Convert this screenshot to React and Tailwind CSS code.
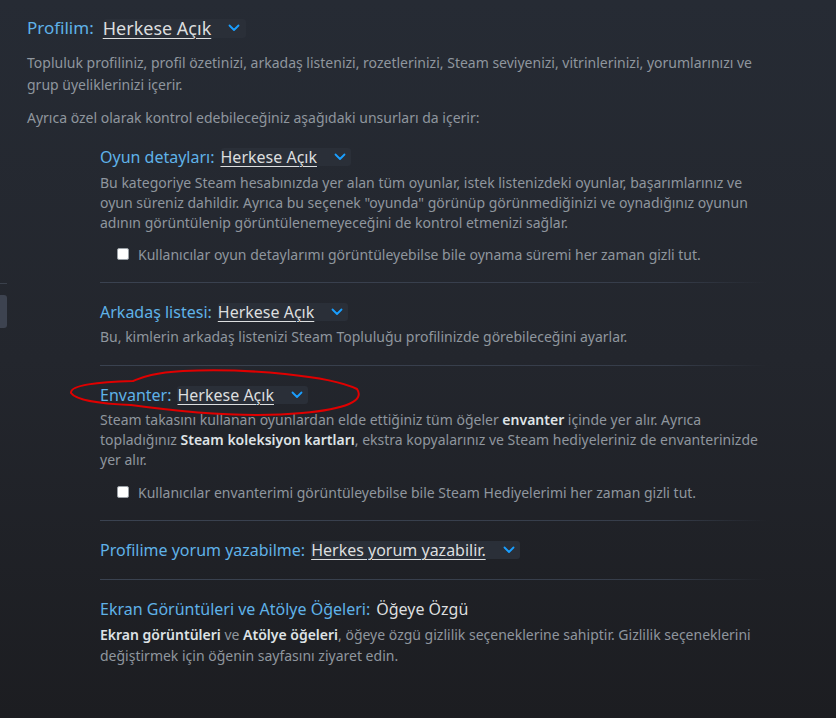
import React from "react";

const Chevron = () => (
  <svg width="12" height="8" viewBox="0 0 12 8" fill="none" className="shrink-0">
    <path d="M1.5 1.5 L6 6 L10.5 1.5" stroke="#1a9fff" strokeWidth="1.8" strokeLinecap="round" strokeLinejoin="round" />
  </svg>
);

const Dropdown = ({ value, big }) => (
  <div
    className={
      "flex items-center rounded-[3px] bg-[#2a2f38] gap-[17px] " +
      (big ? "h-[19px] pr-[6px]" : "h-[18px] pr-[5px]")
    }
  >
    <span
      className={
        "text-[#dcdedf] underline underline-offset-[3px] decoration-1 " +
        (big ? "text-[18px] leading-[19px]" : "text-[16px] leading-[18px]")
      }
    >
      {value}
    </span>
    <Chevron />
  </div>
);

const Divider = () => (
  <div className="h-px bg-gradient-to-r from-[#3a4250] via-[#363d4a] via-85% to-transparent" />
);

const Checkbox = ({ label }) => (
  <div className="ml-[17px] flex h-[20px] items-center gap-[9px]">
    <div className="h-[12px] w-[12px] rounded-[2px] border border-[#9aa0a6] bg-white" />
    <span className="text-[14px] text-[#8f969e]">{label}</span>
  </div>
);

const SubTitle = ({ label, children }) => (
  <div className="flex h-[24px] items-center gap-[6px]">
    <span className="text-[16px] text-[#5fb2e8]">{label}</span>
    {children}
  </div>
);

const Desc = ({ children, className = "" }) => (
  <p className={"text-[14px] leading-[20px] text-[#8f969e] " + className}>{children}</p>
);

const B = ({ children }) => <span className="font-semibold text-[#dfe3e6]">{children}</span>;

export default function App() {
  return (
    <div
      className="relative flex min-h-[718px] w-full bg-gradient-to-b from-[#262b34] via-[#23262d] to-[#1c1d21]"
      style={{ fontFamily: '"Noto Sans", "Open Sans", sans-serif' }}
    >
      <div className="flex w-[7px] shrink-0 flex-col">
        <div className="mt-[283px] h-px bg-[#3a404b]" />
        <div className="mt-[11px] h-[33px] rounded-r-[3px] bg-[#3d4350]" />
      </div>

      <div className="ml-[20px] w-[740px] pt-[16px]">
        <div className="flex h-[24px] items-center gap-[9px]">
          <span className="text-[17px] text-[#5fb2e8]">Profilim:</span>
          <Dropdown value="Herkese Açık" big />
        </div>
        <p className="mt-[12px] text-[14px] leading-[22px] text-[#8f969e]">
          Topluluk profiliniz, profil özetinizi, arkadaş listenizi, rozetlerinizi, Steam seviyenizi, vitrinlerinizi, yorumlarınızı ve grup üyeliklerinizi içerir.
        </p>
        <p className="mt-[11px] text-[14px] leading-[22px] text-[#8f969e]">
          Ayrıca özel olarak kontrol edebileceğiniz aşağıdaki unsurları da içerir:
        </p>

        <div className="ml-[73px] mt-[16px]">
          <div className="pb-[18px]">
            <SubTitle label="Oyun detayları:">
              <Dropdown value="Herkese Açık" />
            </SubTitle>
            <Desc className="mt-[4px]">
              Bu kategoriye Steam hesabınızda yer alan tüm oyunlar, istek listenizdeki oyunlar, başarımlarınız ve oyun süreniz dahildir. Ayrıca bu seçenek "oyunda" görünüp görünmediğinizi ve oynadığınız oyunun adının görüntülenip görüntülenemeyeceğini de kontrol etmenizi sağlar.
            </Desc>
            <div className="mt-[11px]">
              <Checkbox label="Kullanıcılar oyun detaylarımı görüntüleyebilse bile oynama süremi her zaman gizli tut." />
            </div>
          </div>
          <Divider />

          <div className="pt-[17px] pb-[18px]">
            <SubTitle label="Arkadaş listesi:">
              <Dropdown value="Herkese Açık" />
            </SubTitle>
            <Desc className="mt-[3px]">
              Bu, kimlerin arkadaş listenizi Steam Topluluğu profilinizde görebileceğini ayarlar.
            </Desc>
          </div>
          <Divider />

          <div className="pt-[17px] pb-[18px]">
            <SubTitle label="Envanter:">
              <Dropdown value="Herkese Açık" />
            </SubTitle>
            <Desc className="mt-[3px]">
              Steam takasını kullanan oyunlardan elde ettiğiniz tüm öğeler <B>envanter</B> içinde yer alır. Ayrıca topladığınız <B>Steam koleksiyon kartları</B>, ekstra kopyalarınız ve Steam hediyeleriniz de envanterinizde yer alır.
            </Desc>
            <div className="mt-[12px]">
              <Checkbox label="Kullanıcılar envanterimi görüntüleyebilse bile Steam Hediyelerimi her zaman gizli tut." />
            </div>
          </div>
          <Divider />

          <div className="pt-[17px] pb-[17px]">
            <SubTitle label="Profilime yorum yazabilme:">
              <Dropdown value="Herkes yorum yazabilir." />
            </SubTitle>
          </div>
          <Divider />

          <div className="pt-[17px] pb-[40px]">
            <div className="flex h-[24px] items-center gap-[6px]">
              <span className="text-[16px] text-[#5fb2e8]">Ekran Görüntüleri ve Atölye Öğeleri:</span>
              <span className="text-[16px] text-[#dcdedf]">Öğeye Özgü</span>
            </div>
            <p className="mt-[3px] text-[14px] leading-[21px] text-[#8f969e]">
              <B>Ekran görüntüleri</B> ve <B>Atölye öğeleri</B>, öğeye özgü gizlilik seçeneklerine sahiptir. Gizlilik seçeneklerini değiştirmek için öğenin sayfasını ziyaret edin.
            </p>
          </div>
        </div>
      </div>

      <svg
        className="pointer-events-none absolute left-0 top-0"
        width="836"
        height="718"
        viewBox="0 0 836 718"
        fill="none"
      >
        <path
          d="M183 371 C250 368 330 376 357 389 C365 401 346 409 302 413 C250 418 182 412 131 405 C101 404 76 400 71 393 C70 385 98 382 133 381 C141 378 150 373 183 371"
          stroke="#e00000"
          strokeWidth="2"
          strokeLinecap="round"
        />
      </svg>
    </div>
  );
}
